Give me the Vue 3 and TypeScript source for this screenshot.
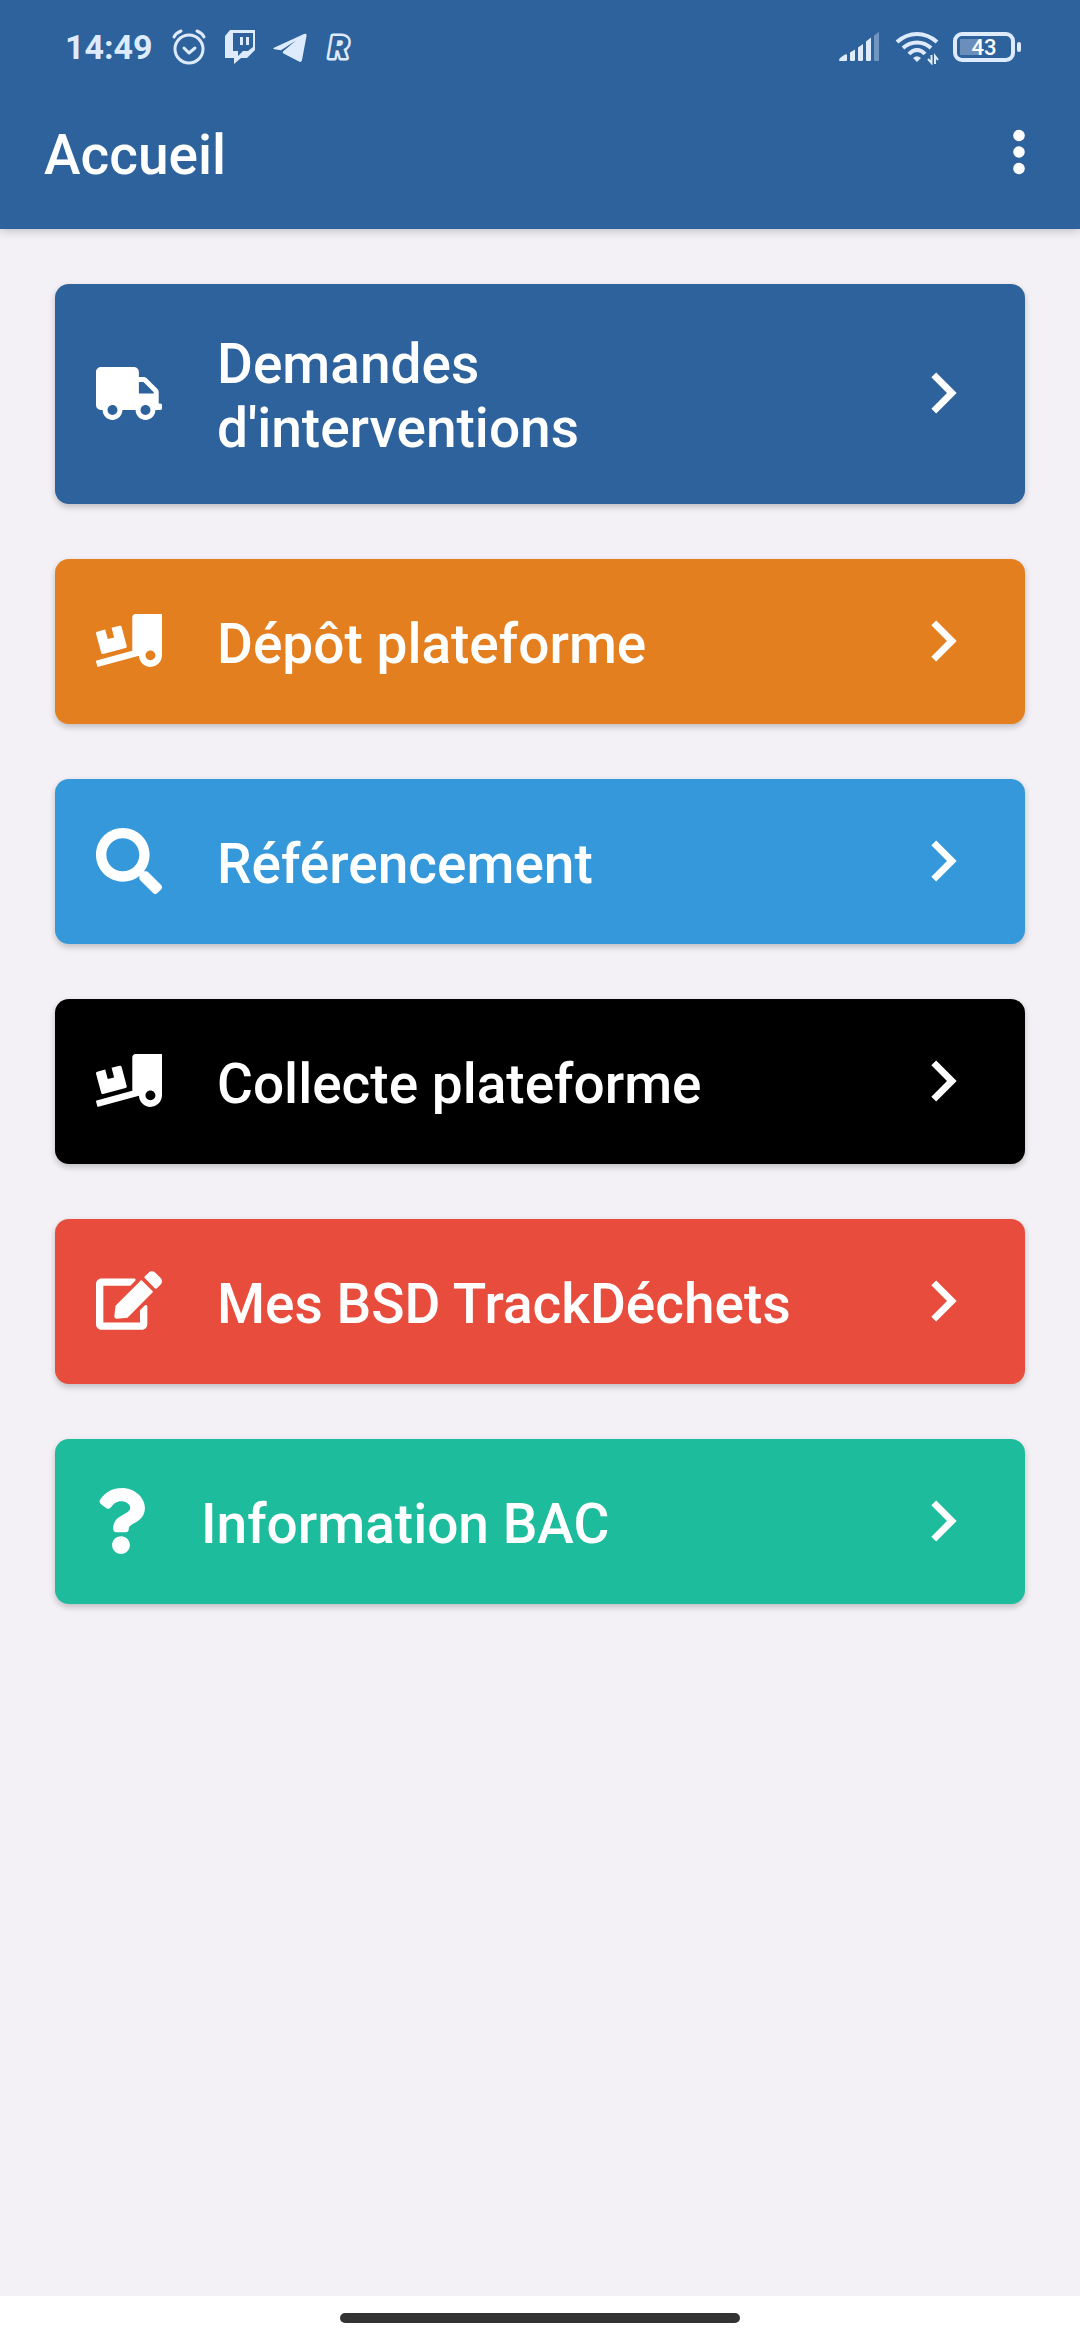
<script setup lang="ts">
interface Icon {
  width: number
  height: number
  viewBox: string
  path: string
}

interface MenuItem {
  label: string
  tone: string
  icon: Icon
}

const truck: Icon = {
  width: 66,
  height: 53,
  viewBox: '0 0 640 512',
  path: 'M624 352h-16V243.9c0-12.7-5.1-24.9-14.1-33.9L494 110.1c-9-9-21.2-14.1-33.9-14.1H416V48c0-26.5-21.5-48-48-48H48C21.5 0 0 21.5 0 48v320c0 26.5 21.5 48 48 48h16c0 53 43 96 96 96s96-43 96-96h128c0 53 43 96 96 96s96-43 96-96h48c8.8 0 16-7.2 16-16v-32c0-8.8-7.2-16-16-16zM160 464c-26.5 0-48-21.5-48-48s21.5-48 48-48 48 21.5 48 48-21.5 48-48 48zm320 0c-26.5 0-48-21.5-48-48s21.5-48 48-48 48 21.5 48 48-21.5 48-48 48zm80-208H416V144h44.1l99.9 99.9V256z',
}

const truckLoading: Icon = {
  width: 66,
  height: 53,
  viewBox: '0 0 640 512',
  path: 'M50.2 375.6c2.3 8.5 11.1 13.6 19.6 11.3l216.4-58c8.5-2.3 13.6-11.1 11.3-19.6l-49.7-185.5c-2.3-8.5-11.1-13.6-19.6-11.3L151 133.3l24.8 92.7-61.8 16.5-24.8-92.7-77.3 20.7C3.4 172.8-1.7 181.6.6 190.1l49.6 185.5zM384 0c-17.7 0-32 14.3-32 32v323.6L5.9 450c-4.3 1.2-6.8 5.6-5.6 9.8l12.6 46.3c1.2 4.3 5.6 6.8 9.8 5.6l393.7-107.4C418.8 464.1 467.6 512 528 512c61.9 0 112-50.1 112-112V0H384zm144 448c-26.5 0-48-21.5-48-48s21.5-48 48-48 48 21.5 48 48-21.5 48-48 48z',
}

const search: Icon = {
  width: 66,
  height: 66,
  viewBox: '0 0 512 512',
  path: 'M505 442.7L405.3 343c-4.5-4.5-10.6-7-17-7H372c27.6-35.3 44-79.7 44-128C416 93.1 322.9 0 208 0S0 93.1 0 208s93.1 208 208 208c48.3 0 92.7-16.4 128-44v16.3c0 6.4 2.5 12.5 7 17l99.7 99.7c9.4 9.4 24.6 9.4 33.9 0l28.3-28.3c9.4-9.4 9.4-24.6.1-34zM208 336c-70.7 0-128-57.2-128-128 0-70.7 57.2-128 128-128 70.7 0 128 57.2 128 128 0 70.7-57.2 128-128 128z',
}

const edit: Icon = {
  width: 66,
  height: 59,
  viewBox: '0 0 576 512',
  path: 'M402.6 83.2l90.2 90.2c3.8 3.8 3.8 10 0 13.8L274.4 405.6l-92.8 10.3c-12.4 1.4-22.9-9.1-21.5-21.5l10.3-92.8L388.8 83.2c3.8-3.8 10-3.8 13.8 0zm162-22.9l-48.8-48.8c-15.2-15.2-39.9-15.2-55.2 0l-35.4 35.4c-3.8 3.8-3.8 10 0 13.8l90.2 90.2c3.8 3.8 10 3.8 13.8 0l35.4-35.4c15.2-15.3 15.2-40 0-55.2zM384 346.2V448H64V128h229.8c3.2 0 6.2-1.3 8.5-3.5l40-40c7.6-7.6 2.2-20.5-8.5-20.5H48C21.5 64 0 85.5 0 112v352c0 26.5 21.5 48 48 48h352c26.5 0 48-21.5 48-48V306.2c0-10.7-12.9-16-20.5-8.5l-40 40c-2.2 2.3-3.5 5.3-3.5 8.5z',
}

const question: Icon = {
  width: 50,
  height: 66,
  viewBox: '0 0 384 512',
  path: 'M202.021 0C122.202 0 70.503 32.703 29.914 91.026c-7.363 10.58-5.093 25.086 5.178 32.874l43.138 32.709c10.373 7.865 25.132 6.026 33.253-4.148 25.049-31.381 43.63-49.449 82.757-49.449 30.764 0 68.816 19.799 68.816 49.631 0 22.552-18.617 34.134-48.993 51.164-35.423 19.86-82.299 44.576-82.299 106.405V320c0 13.255 10.745 24 24 24h72.471c13.255 0 24-10.745 24-24v-5.773c0-42.86 125.268-44.645 125.268-160.627C377.504 66.256 286.902 0 202.021 0zM192 373.459c-38.196 0-69.271 31.075-69.271 69.271 0 38.195 31.075 69.27 69.271 69.27s69.271-31.075 69.271-69.271-31.075-69.27-69.271-69.27z',
}

const items: MenuItem[] = [
  { label: "Demandes d'interventions", tone: 'navy', icon: truck },
  { label: 'Dépôt plateforme', tone: 'orange', icon: truckLoading },
  { label: 'Référencement', tone: 'blue', icon: search },
  { label: 'Collecte plateforme', tone: 'black', icon: truckLoading },
  { label: 'Mes BSD TrackDéchets', tone: 'red', icon: edit },
  { label: 'Information BAC', tone: 'green', icon: question },
]
</script>

<template>
  <div class="screen">
    <header class="top">
      <div class="status">
        <div class="status-group">
          <span class="time">14:49</span>
          <!-- alarm clock -->
          <svg width="36" height="36" viewBox="0 0 36 36" fill="none" stroke="currentColor" stroke-linecap="round" stroke-linejoin="round">
            <circle cx="18" cy="20" r="14" stroke-width="3" />
            <path d="M13 19l5 5 6-5" stroke-width="3" />
            <path d="M3 8q2-4 7-6M33 8q-2-4-7-6" stroke-width="3" />
          </svg>
          <!-- Twitch -->
          <svg width="30" height="36" viewBox="0 0 30 36" fill="currentColor" fill-rule="evenodd">
            <path d="M5 1H30V21L22 29H16L9 35V29H0V7ZM8 4V22H13V27L18 22H23L28 18V4ZM15 8h3v8h-3zM21 8h3v8h-3z" />
          </svg>
          <!-- Telegram -->
          <svg width="34" height="36" viewBox="0 0 34 36" fill="currentColor">
            <path d="M1.500 18.500L31 5Q34 4 33.500 7L29 31Q28.300 34 25.500 32.300L10.500 24.500Q9 23.500 10.500 22L23 11.500L8 21.200L1.500 20.200Q-.8 19.500 1.500 18.500Z" />
          </svg>
          <svg class="logo-r" width="28" height="36" viewBox="0 0 28 36">
            <text x="4" y="29">R</text>
          </svg>
        </div>
        <div class="status-group right">
          <!-- mobile signal -->
          <svg width="42" height="36" viewBox="0 0 42 36" fill="currentColor">
            <path d="M0 31q0-2 3-3.500l3-2q2-1 2 1V31q0 1-1 1H1q-1 0-1-1zM11 23.500l5-3V31q0 1-1 1h-3q-1 0-1-1zM19 18.500l5-3.500v16q0 1-1 1h-3q-1 0-1-1zM27 12.500l5-4V31q0 1-1 1h-3q-1 0-1-1z" />
            <path d="M35 6.500l5-3.500v28q0 1-1 1h-3q-1 0-1-1z" opacity=".38" />
          </svg>
          <!-- wifi with traffic arrows -->
          <svg width="44" height="36" viewBox="0 0 44 36" fill="none" stroke="currentColor" stroke-width="4">
            <path d="M2 13Q11 5 22 5T42 13M8 19Q14 13.500 22 13.500T36 19M14 25Q17.500 21 22 21T30 25" />
            <path d="M18 29q4-3.500 8 0l-4 4z" fill="currentColor" stroke="none" />
            <path d="M36.500 26v8l-3.500-4M40 35v-8l3 4" stroke-width="2" />
          </svg>
          <div class="battery"><span class="battery-level">43</span></div>
        </div>
      </div>
      <div class="toolbar">
        <h1 class="title">Accueil</h1>
        <button class="more" type="button" aria-label="Plus d'options">
          <svg width="66" height="66" viewBox="0 0 24 24" fill="currentColor">
            <circle cx="12" cy="6" r="2.100" />
            <circle cx="12" cy="12" r="2.100" />
            <circle cx="12" cy="18" r="2.100" />
          </svg>
        </button>
      </div>
    </header>

    <main class="menu">
      <button v-for="item in items" :key="item.label" type="button" class="card" :class="item.tone">
        <svg class="icon" :width="item.icon.width" :height="item.icon.height" :viewBox="item.icon.viewBox" fill="currentColor">
          <path :d="item.icon.path" />
        </svg>
        <span class="label">{{ item.label }}</span>
        <svg class="chevron" width="82" height="82" viewBox="0 0 24 24" fill="currentColor">
          <path d="M10 6L8.590 7.410 13.170 12l-4.580 4.590L10 18l6-6z" />
        </svg>
      </button>
    </main>

    <footer class="nav"><div class="handle"></div></footer>
  </div>
</template>

<style>
body {
  margin: 0;
  background: #f3f1f5;
}
</style>

<style scoped>
.screen {
  display: flex;
  flex-direction: column;
  min-height: 100vh;
  background: #f3f1f5;
  color: #fff;
  font-family: Roboto, "Liberation Sans", sans-serif;
}

svg {
  display: block;
  flex: none;
}

.top {
  background: #2d629c;
  box-shadow: 0 1px 10px rgba(0, 0, 0, 0.25);
}

.status {
  display: flex;
  align-items: center;
  justify-content: space-between;
  height: 75px;
  padding: 19px 59px 0 65px;
  box-sizing: border-box;
  color: #deebfc;
}

.status-group {
  display: flex;
  align-items: center;
  height: 36px;
  gap: 18px;
}

.right {
  gap: 14px;
}

.time {
  font-size: 34px;
  line-height: 36px;
  font-weight: 700;
}

.logo-r text {
  font-size: 31px;
  font-weight: 900;
  font-style: italic;
  fill: #2d629c;
  stroke: #deebfc;
  stroke-width: 5px;
  stroke-linejoin: round;
  paint-order: stroke;
}

.battery {
  position: relative;
  width: 62px;
  height: 30px;
  margin-right: 6px;
  border: 4px solid #deebfc;
  border-radius: 9px;
  box-sizing: border-box;
  background: linear-gradient(#6a8fbd, #6a8fbd) 3px 3px / 20px 16px no-repeat;
}

.battery::after {
  content: "";
  position: absolute;
  top: 6px;
  right: -10px;
  width: 4px;
  height: 10px;
  border-radius: 2px;
  background: #deebfc;
}

.battery-level {
  display: block;
  color: #fff;
  font-size: 22px;
  line-height: 24px;
  font-weight: 500;
  text-align: center;
}

.toolbar {
  display: flex;
  align-items: center;
  justify-content: space-between;
  height: 154px;
  padding: 0 28px 0 44px;
  box-sizing: border-box;
}

.title {
  margin: 0;
  padding-top: 6px;
  font-size: 55px;
  line-height: 64px;
  font-weight: 500;
}

.more {
  padding: 0;
  border: 0;
  background: none;
  color: inherit;
}

.menu {
  display: flex;
  flex: 1;
  flex-direction: column;
  gap: 55px;
  padding: 55px;
}

.card {
  display: flex;
  align-items: center;
  min-height: 165px;
  padding: 40px 41px 42px;
  border: 0;
  border-radius: 14px;
  box-sizing: border-box;
  box-shadow: 0 3px 6px rgba(0, 0, 0, 0.22);
  color: #fff;
  font-family: inherit;
  font-size: 55px;
  line-height: 64px;
  font-weight: 500;
  text-align: left;
}

.label {
  flex: 1;
  padding: 8px 82px 2px 55px;
}

.navy {
  background: #2d629c;
}

.orange {
  background: #e47f20;
}

.blue {
  background: #3498db;
}

.black {
  background: #000;
}

.red {
  background: #e74c3c;
}

.green {
  background: #1cbc9c;
}

.nav {
  display: flex;
  justify-content: center;
  height: 44px;
  padding-top: 17px;
  box-sizing: border-box;
  background: #fff;
}

.handle {
  width: 37%;
  height: 10px;
  border-radius: 5px;
  background: #333;
}
</style>
